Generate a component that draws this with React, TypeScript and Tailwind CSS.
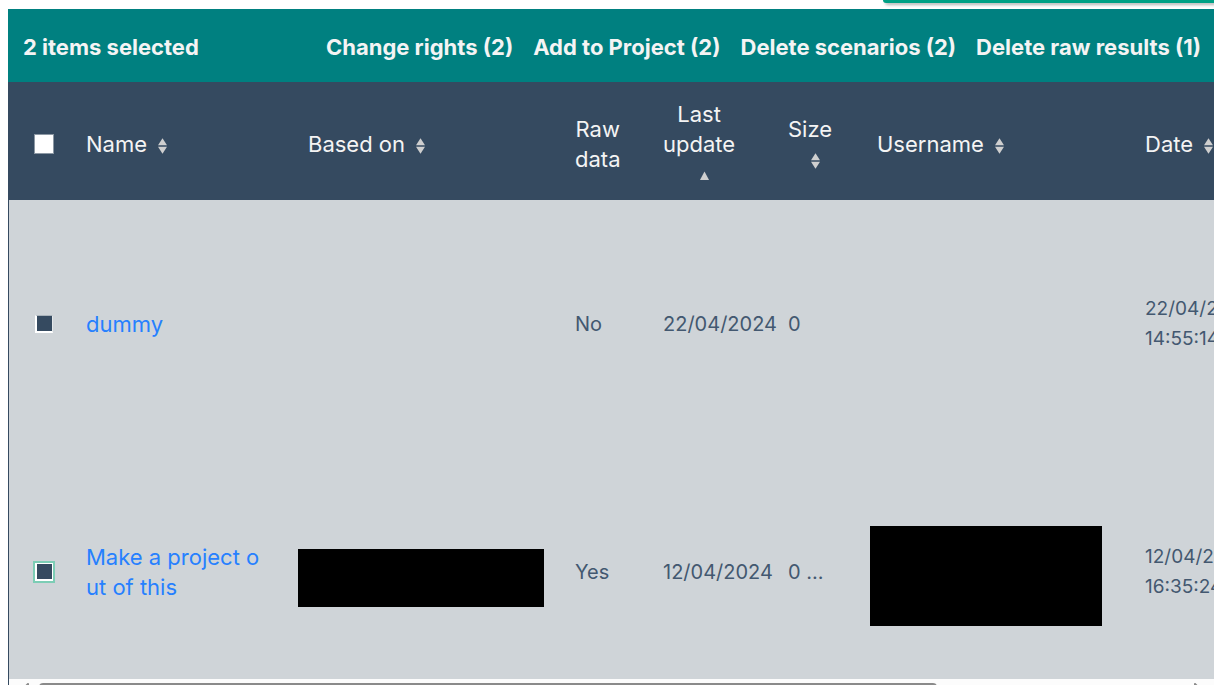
import { useState } from "react";
import type { ReactNode } from "react";

type SortState = "none" | "asc";

function SortIcon({ state = "none" }: { state?: SortState }) {
  return (
    <svg width="9" height="16" viewBox="0 0 9 16" aria-hidden="true" className="shrink-0">
      {state === "none" ? (
        <>
          <path d="M4.5 0.2L9 7.2H0Z" fill="#cfcfcf" />
          <path d="M4.5 15.8L9 8.8H0Z" fill="#cfcfcf" />
        </>
      ) : (
        <path d="M4.5 3.5L9 12H0Z" fill="#cfcfcf" />
      )}
    </svg>
  );
}

function SortButton({ children, sort, stacked = false }: { children: ReactNode; sort?: SortState; stacked?: boolean }) {
  return (
    <button
      type="button"
      className={
        stacked
          ? "flex flex-col items-center text-center leading-[30px]"
          : "flex items-center gap-[11px] whitespace-nowrap leading-[30px]"
      }
    >
      <span>{children}</span>
      {sort && (
        <span className={stacked ? "flex h-[30px] items-center pt-1 pl-[10px]" : "flex items-center pt-1"}>
          <SortIcon state={sort} />
        </span>
      )}
    </button>
  );
}

type Row = {
  name: ReactNode;
  label: string;
  redacted: boolean;
  raw: string;
  updated: string;
  size: string;
  date: string;
  time: string;
};

const rows: Row[] = [
  { name: "dummy", label: "dummy", redacted: false, raw: "No", updated: "22/04/2024", size: "0", date: "22/04/2024", time: "14:55:14" },
  {
    name: (
      <>
        Make a project o<br />
        ut of this
      </>
    ),
    label: "Make a project out of this",
    redacted: true,
    raw: "Yes",
    updated: "12/04/2024",
    size: "0 ...",
    date: "12/04/2024",
    time: "16:35:24",
  },
];

const actions = ["Change rights (2)", "Add to Project (2)", "Delete scenarios (2)", "Delete raw results (1)"];

export default function App() {
  const [checked, setChecked] = useState([true, true]);

  const toggle = (index: number) => setChecked(checked.map((value, i) => (i === index ? !value : value)));

  return (
    <main className="flex h-screen flex-col overflow-hidden bg-white font-['Inter',sans-serif] text-[20px] text-[#435870]">
      <div className="flex h-[9px] shrink-0 justify-end">
        <div className="h-[3px] w-[331px] rounded-bl-sm bg-[#00a085] shadow-[2px_2px_3px_rgba(0,0,0,0.3)]" />
      </div>

      <section className="ml-2 flex min-h-0 flex-1 flex-col border-l border-[#354a60]">
        <div className="-ml-px flex h-[73px] shrink-0 items-center justify-between bg-[#008080] pt-[3px] pr-[13px] pl-[15px] text-[22px] font-bold whitespace-nowrap text-[#f4f4f4]">
          <p>2 items selected</p>
          <div className="flex gap-5">
            {actions.map((action) => (
              <button key={action} type="button">
                {action}
              </button>
            ))}
          </div>
        </div>

        <div className="min-h-0 flex-1 overflow-hidden">
          <table className="w-[1560px] table-fixed border-collapse text-left">
            <colgroup>
              <col className="w-[67px]" />
              <col className="w-[222px]" />
              <col className="w-[267px]" />
              <col className="w-[88px]" />
              <col className="w-[125px]" />
              <col className="w-[89px]" />
              <col className="w-[268px]" />
              <col />
            </colgroup>
            <thead>
              <tr className="h-[118px] bg-[#354a60] text-[22px] text-[#f4f4f4] *:px-[10px] *:pt-[5px] *:font-normal">
                <th scope="col">
                  <input
                    type="checkbox"
                    aria-label="Select all"
                    className="ml-[15px] block size-5 appearance-none border border-[#8c98a4] bg-white"
                  />
                </th>
                <th scope="col">
                  <SortButton sort="none">Name</SortButton>
                </th>
                <th scope="col">
                  <SortButton sort="none">Based on</SortButton>
                </th>
                <th scope="col">
                  <SortButton stacked>
                    Raw
                    <br />
                    data
                  </SortButton>
                </th>
                <th scope="col">
                  <SortButton stacked sort="asc">
                    Last
                    <br />
                    update
                  </SortButton>
                </th>
                <th scope="col">
                  <SortButton stacked sort="none">
                    Size
                  </SortButton>
                </th>
                <th scope="col">
                  <SortButton sort="none">Username</SortButton>
                </th>
                <th scope="col">
                  <SortButton sort="none">Date</SortButton>
                </th>
              </tr>
            </thead>
            <tbody>
              {rows.map((row, index) => (
                <tr key={row.label} className="h-[248px] bg-[#cfd4d8] leading-[30px] whitespace-nowrap *:px-[10px]">
                  <td>
                    <input
                      type="checkbox"
                      aria-label={`Select ${row.label}`}
                      checked={checked[index]}
                      onChange={() => toggle(index)}
                      className={
                        index === 1
                          ? "ml-4 block size-[18px] appearance-none border border-b-2 border-l-2 border-white bg-white outline-2 outline-[#7ccdb5] checked:bg-[#354a60]"
                          : "ml-4 block size-[18px] appearance-none border border-b-2 border-l-2 border-white border-t-[#aab3bb] border-r-[#e4e7e9] bg-white checked:bg-[#354a60]"
                      }
                    />
                  </td>
                  <td>
                    <a href="#scenario" className="inline-block text-[22px] text-[#2680ff]">
                      {row.name}
                    </a>
                  </td>
                  <td className="px-0!">{row.redacted && <div className="mt-3 h-[58px] w-[246px] bg-black" />}</td>
                  <td>{row.raw}</td>
                  <td>{row.updated}</td>
                  <td>{row.size}</td>
                  <td className="px-[3px]!">{row.redacted && <div className="mt-2 h-[100px] w-[232px] bg-black" />}</td>
                  <td className="text-[19px]">
                    {row.date}
                    <br />
                    {row.time}
                  </td>
                </tr>
              ))}
            </tbody>
          </table>
        </div>

        <div className="flex h-[6px] shrink-0 items-start overflow-hidden bg-[#fcfcfc] pt-1 pr-3 pl-3">
          <svg width="8" height="12" viewBox="0 0 8 12" className="shrink-0" aria-hidden="true">
            <path d="M7 1V11L2 6Z" fill="#8a8a8a" stroke="#8a8a8a" strokeWidth="2" strokeLinejoin="round" />
          </svg>
          <div className="ml-[10px] h-2 w-[76%] rounded-full bg-[#8a8a8a]" />
          <svg width="8" height="12" viewBox="0 0 8 12" className="ml-auto shrink-0" aria-hidden="true">
            <path d="M1 1V11L6 6Z" fill="#8a8a8a" stroke="#8a8a8a" strokeWidth="2" strokeLinejoin="round" />
          </svg>
        </div>
      </section>
    </main>
  );
}
